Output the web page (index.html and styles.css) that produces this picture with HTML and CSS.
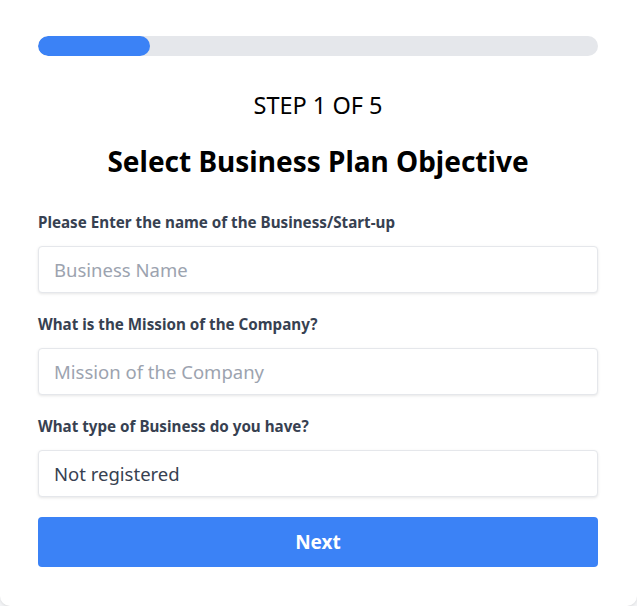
FILE: index.html
```html
<!DOCTYPE html>
<html>
<head>
<meta charset="utf-8">
<link rel="stylesheet" href="styles.css">
</head>
<body>
<div class="card">
  <div class="progress"><div class="progress-fill" style="width:20%"></div></div>
  <div class="step">STEP 1 OF 5</div>
  <h1 class="title">Select Business Plan Objective</h1>
  <form class="form">
    <div class="field">
      <label class="label">Please Enter the name of the Business/Start-up</label>
      <input class="input" type="text" placeholder="Business Name">
    </div>
    <div class="field">
      <label class="label">What is the Mission of the Company?</label>
      <input class="input" type="text" placeholder="Mission of the Company">
    </div>
    <div class="field">
      <label class="label">What type of Business do you have?</label>
      <div class="input select">Not registered</div>
    </div>
    <button class="btn" type="button">Next</button>
  </form>
</div>
</body>
</html>
```

FILE: styles.css
```css
* { box-sizing: border-box; }
html, body { margin: 0; padding: 0; }
body {
  background: #f3f4f6;
  font-family: "Noto Sans", "Open Sans", sans-serif;
  height: 606px;
  overflow: hidden;
}
.card {
  background: #ffffff;
  width: 637px;
  height: 606px;
  padding: 36px 39px 0 38px;
  border-radius: 0 0 10px 10px;
  box-shadow: 0 1px 3px rgba(0,0,0,0.1);
}
.progress {
  height: 20px;
  background: #e5e7eb;
  border-radius: 10px;
  overflow: hidden;
}
.progress-fill {
  height: 100%;
  background: #3b82f6;
  border-radius: 10px;
}
.step {
  text-align: center;
  font-size: 23.5px;
  line-height: 32px;
  color: #000;
  margin-top: 33px;
}
.title {
  text-align: center;
  font-size: 28px;
  line-height: 36px;
  font-weight: 700;
  color: #000;
  margin: 22px 0 0;
}
.form { margin-top: 31px; }
.field { margin-bottom: 19px; }
.label {
  display: block;
  font-size: 15.2px;
  line-height: 24px;
  font-weight: 700;
  color: #374151;
  margin-bottom: 12px;
}
.input {
  display: block;
  width: 100%;
  height: 47px;
  border: 1px solid #e5e7eb;
  border-radius: 4px;
  box-shadow: 0 1px 3px rgba(0,0,0,0.1);
  padding: 0 15px;
  font-family: inherit;
  font-size: 18.5px;
  color: #374151;
  background: #fff;
  outline: none;
}
.input::placeholder { color: #9ca3af; }
.select {
  display: flex;
  align-items: center;
}
.btn {
  display: block;
  width: 100%;
  height: 50px;
  background: #3b82f6;
  color: #fff;
  border: none;
  border-radius: 4px;
  font-family: inherit;
  font-size: 19px;
  font-weight: 700;
  margin-top: 20px;
}
```
